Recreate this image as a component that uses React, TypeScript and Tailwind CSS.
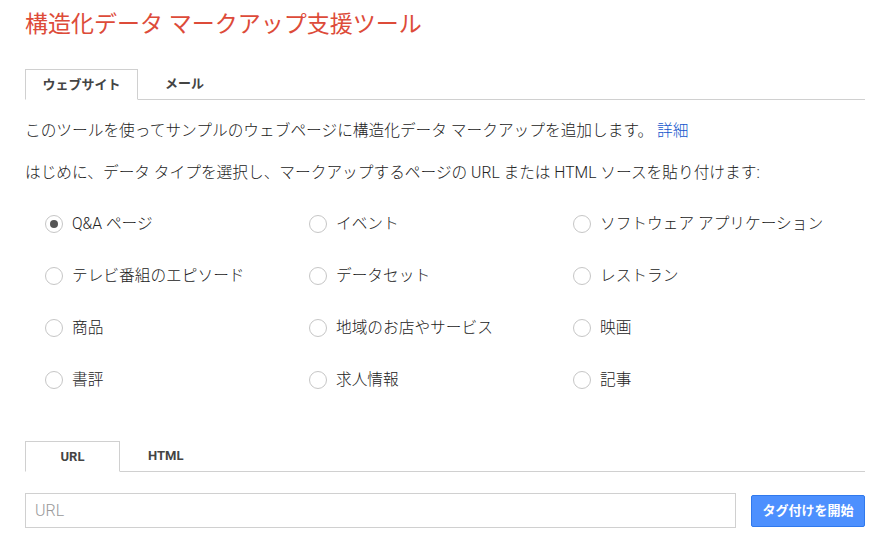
import React, { useState } from 'react';

const types = [
  'Q&A ページ',
  'イベント',
  'ソフトウェア アプリケーション',
  'テレビ番組のエピソード',
  'データセット',
  'レストラン',
  '商品',
  '地域のお店やサービス',
  '映画',
  '書評',
  '求人情報',
  '記事',
];

function Radio({ checked }: { checked: boolean }) {
  return (
    <span className="flex h-[18px] w-[18px] shrink-0 items-center justify-center rounded-full border border-[#c6c6c6] bg-white">
      {checked && <span className="h-[8px] w-[8px] rounded-full bg-[#555]" />}
    </span>
  );
}

export default function App() {
  const [selected, setSelected] = useState(0);
  const [url, setUrl] = useState('');

  return (
    <div
      className="min-h-screen bg-white pl-[25px] pr-[16px] text-[#222]"
      style={{ fontFamily: 'Roboto, "Noto Sans CJK JP", sans-serif' }}
    >
      {/* Title */}
      <h1 className="pt-[10px] text-[23px] leading-[30px] font-normal text-[#dd4b39]">
        構造化データ マークアップ支援ツール
      </h1>

      {/* Top tabs */}
      <div className="mt-[29px] flex h-[31px] border-b border-[#d0d0d0]">
        <div className="-mb-px flex w-[113px] items-center justify-center border border-b-white border-[#d0d0d0] bg-white text-[13px] font-bold text-[#444]">
          ウェブサイト
        </div>
        <div className="flex items-center pl-[27px] text-[13px] font-bold text-[#444]">メール</div>
      </div>

      {/* Description */}
      <p className="mt-[20px] text-[15.7px] leading-[22px] font-light">
        このツールを使ってサンプルのウェブページに構造化データ マークアップを追加します。{' '}
        <a className="text-[#1155cc]" href="#">詳細</a>
      </p>
      <p className="mt-[20px] text-[15.7px] leading-[22px] font-light">
        はじめに、データ タイプを選択し、マークアップするページの URL または HTML ソースを貼り付けます:
      </p>

      {/* Data types */}
      <div className="mt-[31px] grid grid-cols-[264px_264px_264px] gap-y-[34px] pl-[20px]">
        {types.map((t, i) => (
          <label
            key={t}
            className="flex h-[18px] cursor-pointer items-center gap-[9px] text-[15.7px] font-light"
            onClick={() => setSelected(i)}
          >
            <Radio checked={selected === i} />
            <span>{t}</span>
          </label>
        ))}
      </div>

      {/* URL / HTML tabs */}
      <div className="mt-[52px] flex h-[31px] border-b border-[#d0d0d0]">
        <div className="-mb-px flex w-[95px] items-center justify-center border border-b-white border-[#d0d0d0] bg-white text-[13px] font-bold text-[#444]">
          URL
        </div>
        <div className="flex items-center pl-[28px] text-[13px] font-bold text-[#444]">HTML</div>
      </div>

      {/* URL input */}
      <div className="mt-[21px] flex items-center gap-[15px]">
        <input
          className="h-[35px] flex-1 border border-[#d0d0d0] px-[9px] text-[16px] font-light text-[#222] placeholder-[#999] outline-none"
          placeholder="URL"
          value={url}
          onChange={e => setUrl(e.target.value)}
        />
        <button className="h-[32px] w-[114px] rounded-[2px] border border-[#3079ed] bg-[#4d90fe] text-[13px] font-bold text-white">
          タグ付けを開始
        </button>
      </div>
    </div>
  );
}
